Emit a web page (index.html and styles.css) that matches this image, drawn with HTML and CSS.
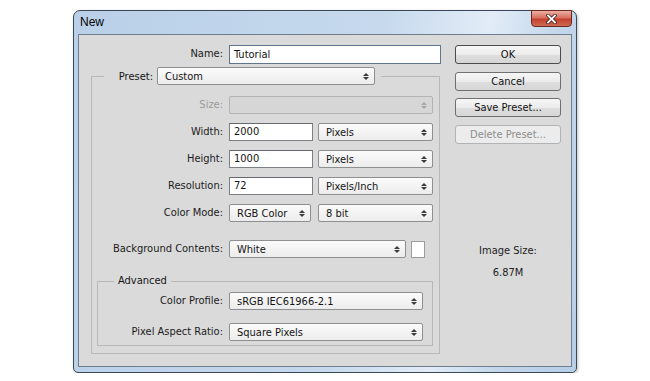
FILE: index.html
```html
<!DOCTYPE html>
<html lang="en">
<head>
    <meta charset="UTF-8">
    <meta name="viewport" content="width=device-width, initial-scale=1.0">
    <title>New Document</title>
    <link rel="stylesheet" href="styles.css">
</head>
<body>
    <div class="window">
        <div class="titlebar">
            <span class="title">New</span>
            <div class="close">
                <svg width="11" height="10" viewBox="0 0 11 10">
                    <path d="M2 1.5 L9 8.5 M9 1.5 L2 8.5" stroke="#3b1a14" stroke-width="3.4" stroke-linecap="square"/>
                    <path d="M2 1.5 L9 8.5 M9 1.5 L2 8.5" stroke="#fff" stroke-width="1.8" stroke-linecap="square"/>
                </svg>
            </div>
        </div>
        <div class="panel">
            <div class="form">
                <div class="name-row">
                    <label class="label name-label">Name:</label>
                    <div class="input name-input">Tutorial</div>
                </div>

                <fieldset class="preset">
                    <legend class="preset-legend">
                        <span class="preset-label">Preset:</span>
                        <div class="select preset-select">Custom<span class="arrows"></span></div>
                    </legend>

                    <div class="row">
                        <label class="label disabled">Size:</label>
                        <div class="select full is-disabled"><span class="arrows"></span></div>
                    </div>
                    <div class="row">
                        <label class="label">Width:</label>
                        <div class="input small">2000</div>
                        <div class="select unit">Pixels<span class="arrows"></span></div>
                    </div>
                    <div class="row">
                        <label class="label">Height:</label>
                        <div class="input small">1000</div>
                        <div class="select unit">Pixels<span class="arrows"></span></div>
                    </div>
                    <div class="row">
                        <label class="label">Resolution:</label>
                        <div class="input small">72</div>
                        <div class="select unit">Pixels/Inch<span class="arrows"></span></div>
                    </div>
                    <div class="row">
                        <label class="label">Color Mode:</label>
                        <div class="select mode">RGB Color<span class="arrows"></span></div>
                        <div class="select unit bits">8 bit<span class="arrows"></span></div>
                    </div>
                    <div class="row bg-row">
                        <label class="label">Background Contents:</label>
                        <div class="select bg">White<span class="arrows"></span></div>
                        <div class="swatch"></div>
                    </div>

                    <fieldset class="advanced">
                        <legend class="advanced-legend">Advanced</legend>
                        <div class="row">
                            <label class="label">Color Profile:</label>
                            <div class="select profile">sRGB IEC61966-2.1<span class="arrows"></span></div>
                        </div>
                        <div class="row">
                            <label class="label">Pixel Aspect Ratio:</label>
                            <div class="select profile">Square Pixels<span class="arrows"></span></div>
                        </div>
                    </fieldset>
                </fieldset>
            </div>

            <div class="side">
                <button class="btn default">OK</button>
                <button class="btn">Cancel</button>
                <button class="btn">Save Preset...</button>
                <button class="btn" disabled>Delete Preset...</button>

                <div class="image-size">
                    <div>Image Size:</div>
                    <div class="size-value">6.87M</div>
                </div>
            </div>
        </div>
    </div>
</body>
</html>
```

FILE: styles.css
```css
body {
    margin: 0;
    background: #fff;
    font-family: "DejaVu Sans Condensed", "Liberation Sans", sans-serif;
    font-size: 11px;
    color: #141414;
}

/* window frame */
.window {
    box-sizing: border-box;
    width: 504px;
    height: 363px;
    margin: 10px 0 0 73px;
    padding: 0 4px 5px 4px;
    display: flex;
    flex-direction: column;
    border: 1px solid #3b4857;
    border-radius: 7px 7px 5px 5px;
    background: linear-gradient(100deg, #b9d0e8 0%, #c6d9ed 55%, #e2ecf7 74%, #c3d7eb 86%, #b6cee7 100%);
    box-shadow: 1px 1px 3px rgba(0, 0, 0, 0.25);
}

.titlebar {
    height: 23px;
    display: flex;
    justify-content: space-between;
    align-items: flex-start;
}

.title {
    font-family: "Liberation Sans", sans-serif;
    font-size: 12px;
    color: #000;
    padding: 4px 0 0 2px;
}

.close {
    box-sizing: border-box;
    width: 41px;
    height: 17px;
    margin-top: -1px;
    display: flex;
    align-items: center;
    justify-content: center;
    border: 1px solid #6a2a20;
    border-radius: 0 0 4px 4px;
    background: linear-gradient(#e9b0a2 0%, #d8705f 45%, #c3402d 55%, #cf6a55 100%);
}

/* dialog body */
.panel {
    flex: 1;
    display: flex;
    gap: 14px;
    padding-top: 10px;
    border: 1px solid #6f7e8e;
    background: #dadada;
}

.form {
    width: 362px;
}

.label {
    flex: none;
    text-align: right;
    line-height: 18px;
    color: #1a1a1a;
}

.label.disabled {
    color: #9a9a9a;
}

.name-row {
    display: flex;
    gap: 6px;
}

.name-label {
    width: 144px;
}

.input {
    box-sizing: border-box;
    height: 19px;
    padding: 0 4px;
    line-height: 17px;
    background: #fff;
    border: 1px solid #7c7f83;
    border-top-color: #65686c;
}

.name-input {
    width: 212px;
    border-color: #5f7590;
}

.input.small {
    width: 84px;
    height: 18px;
    line-height: 16px;
}

.select {
    box-sizing: border-box;
    height: 18px;
    display: flex;
    align-items: center;
    padding: 0 5px 0 7px;
    border: 1px solid #8e8f90;
    border-radius: 2px;
    background: linear-gradient(#fbfbfb, #ececec);
}

.select.is-disabled {
    background: #d6d6d6;
    border-color: #b3b3b3;
}

.arrows {
    margin-left: auto;
    display: flex;
    flex-direction: column;
    gap: 1px;
}

.arrows::before,
.arrows::after {
    content: "";
    border-left: 3px solid transparent;
    border-right: 3px solid transparent;
}

.arrows::before {
    border-bottom: 3px solid #3a3a3a;
}

.arrows::after {
    border-top: 3px solid #3a3a3a;
}

.is-disabled .arrows::before {
    border-bottom-color: #a5a5a5;
}

.is-disabled .arrows::after {
    border-top-color: #a5a5a5;
}

/* preset group */
.preset {
    box-sizing: border-box;
    width: 349px;
    margin: 3px 0 0 12px;
    padding: 11px 0 7px 0;
    border: 1px solid #b8b8b8;
    min-width: 0;
}

.preset-legend {
    display: flex;
    align-items: center;
    gap: 4px;
    margin-left: 12px;
    padding: 0 6px 0 13px;
}

.preset-label {
    width: 36px;
    text-align: right;
}

.preset-select {
    width: 218px;
}

.row {
    display: flex;
    align-items: center;
    gap: 5px;
    margin-bottom: 9px;
}

.row .label {
    width: 131px;
    margin-right: 1px;
}

.select.full {
    width: 204px;
}

.select.unit {
    width: 115px;
}

.select.mode {
    width: 82px;
}

.select.bits {
    margin-left: 2px;
}

.bg-row {
    margin-top: 18px;
    margin-bottom: 0;
}

.select.bg {
    width: 177px;
}

.swatch {
    box-sizing: border-box;
    width: 14px;
    height: 17px;
    background: #fff;
    border: 1px solid #9c9c9c;
}

/* advanced group */
.advanced {
    box-sizing: border-box;
    width: 336px;
    margin: 16px 0 0 5px;
    padding: 4px 0 4px 0;
    border: 1px solid #b8b8b8;
    min-width: 0;
}

.advanced-legend {
    margin-left: 16px;
    padding: 0 4px;
    line-height: 14px;
}

.advanced .row .label {
    width: 125px;
}

.advanced .row {
    margin-bottom: 0;
}

.advanced .row + .row {
    margin-top: 13px;
}

.select.profile {
    width: 194px;
}

/* buttons column */
.side {
    width: 106px;
    display: flex;
    flex-direction: column;
    gap: 7.5px;
}

.btn {
    box-sizing: border-box;
    height: 19px;
    padding: 0;
    font-family: inherit;
    font-size: 11px;
    color: #111;
    border: 1px solid #707070;
    border-radius: 3px;
    background: linear-gradient(#f6f6f6 0%, #ececec 50%, #dedede 51%, #d6d6d6 100%);
}

.btn.default {
    border-color: #4b4b4b;
}

.btn:disabled {
    color: #8c8c8c;
    border-color: #b0b4b6;
    background: #ececec;
}

.image-size {
    margin-top: 93px;
    text-align: center;
    line-height: 14px;
    color: #222;
}

.size-value {
    margin-top: 8px;
}
```
